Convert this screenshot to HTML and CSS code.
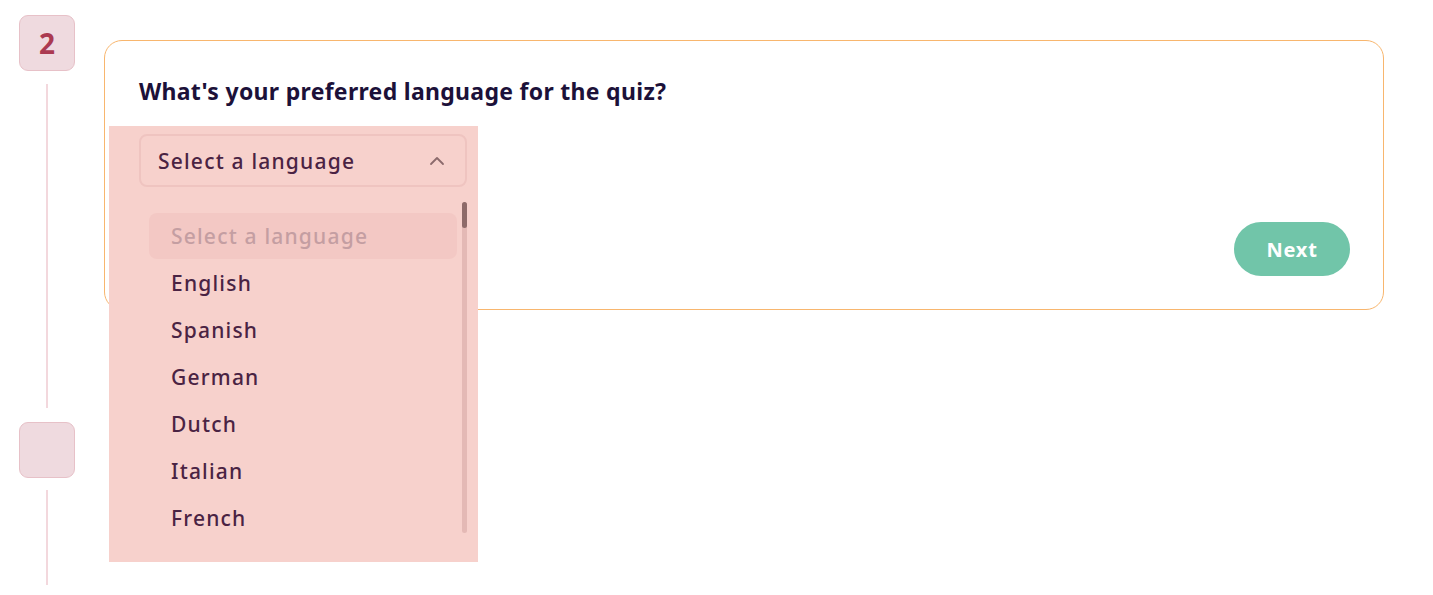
FILE: index.html
```html
<!DOCTYPE html>
<html lang="en">
<head>
    <meta charset="UTF-8">
    <title>Quiz setup</title>
    <link rel="stylesheet" href="styles.css">
</head>
<body>
    <div class="steps">
        <div class="timeline">
            <div class="step-badge">2</div>
            <div class="step-line step-line-long"></div>
            <div class="step-badge"></div>
            <div class="step-line step-line-short"></div>
        </div>

        <div class="question-card">
            <h2 class="question">What's your preferred language for the quiz?</h2>

            <div class="select-wrap">
                <div class="dropdown-panel">
                    <div class="select-trigger">
                        <span>Select a language</span>
                        <svg class="chevron" width="16" height="10" viewBox="0 0 16 10">
                            <path d="M2 8 L8 2 L14 8" fill="none" stroke="#8c6a6c" stroke-width="1.8" stroke-linecap="round" stroke-linejoin="round"/>
                        </svg>
                    </div>
                    <div class="option-list">
                        <ul class="options">
                            <li class="option option-placeholder">Select a language</li>
                            <li class="option">English</li>
                            <li class="option">Spanish</li>
                            <li class="option">German</li>
                            <li class="option">Dutch</li>
                            <li class="option">Italian</li>
                            <li class="option">French</li>
                        </ul>
                        <div class="scrollbar"><div class="scroll-thumb"></div></div>
                    </div>
                </div>
            </div>

            <div class="card-footer">
                <button class="next-btn" type="button">Next</button>
            </div>
        </div>
    </div>
</body>
</html>
```

FILE: styles.css
```css
body {
    margin: 0;
    padding: 0;
    background-color: #fff;
    font-family: "Noto Sans", "Open Sans", sans-serif;
    color: #4a2343;
}

.steps {
    display: flex;
    align-items: flex-start;
    padding-left: 19px;
    gap: 29px;
}

/* timeline */
.timeline {
    display: flex;
    flex-direction: column;
    align-items: center;
    width: 56px;
    padding-top: 15px;
}

.step-badge {
    box-sizing: border-box;
    width: 56px;
    height: 56px;
    border: 1px solid #e7c1c8;
    border-radius: 9px;
    background-color: #efdadf;
    color: #ab3a51;
    font-size: 28px;
    font-weight: 700;
    display: flex;
    align-items: center;
    justify-content: center;
}

.step-line {
    width: 2px;
    background-color: #f3d8dd;
}

.step-line-long {
    height: 324px;
    margin: 13px 0 14px;
}

.step-line-short {
    height: 95px;
    margin-top: 12px;
}

/* card */
.question-card {
    box-sizing: border-box;
    width: 1280px;
    margin-top: 40px;
    padding: 36px 33px 33px 34px;
    border: 1px solid #f8b66e;
    border-radius: 18px;
}

.question {
    margin: 0 0 29px;
    font-size: 23px;
    line-height: 28px;
    font-weight: 700;
    letter-spacing: 0.3px;
    color: #1c1139;
}

.select-wrap {
    position: relative;
    width: 328px;
    height: 53px;
}

.dropdown-panel {
    position: absolute;
    top: -8px;
    left: -30px;
    width: 369px;
    height: 436px;
    box-sizing: border-box;
    padding: 8px 11px 0 30px;
    background-color: #f7d1cc;
    z-index: 2;
}

.select-trigger {
    box-sizing: border-box;
    height: 53px;
    display: flex;
    align-items: center;
    justify-content: space-between;
    padding: 0 20px 0 17px;
    border: 2px solid #efc4c0;
    border-radius: 8px;
    font-size: 21px;
    font-weight: 500;
    letter-spacing: 1.2px;
    color: #4a2343;
}

.option-list {
    display: flex;
    margin-top: 15px;
    height: 331px;
}

.options {
    list-style: none;
    margin: 0;
    padding: 11px 0 0 10px;
    width: 308px;
}

.option {
    height: 46px;
    margin-bottom: 1px;
    padding-left: 22px;
    display: flex;
    align-items: center;
    border-radius: 8px;
    font-size: 21px;
    font-weight: 500;
    letter-spacing: 1.2px;
    color: #4a2343;
}

.option-placeholder {
    background-color: #f3c8c4;
    color: #c49ea2;
}

.scrollbar {
    width: 5px;
    margin-left: 5px;
    border-radius: 3px;
    background-color: #e4b9b5;
}

.scroll-thumb {
    height: 26px;
    border-radius: 3px;
    background-color: #8e6a69;
}

.card-footer {
    display: flex;
    justify-content: flex-end;
    margin-top: 35px;
}

.next-btn {
    width: 116px;
    height: 54px;
    border: none;
    border-radius: 27px;
    background-color: #71c5a9;
    color: #fff;
    font-family: "Noto Sans", sans-serif;
    font-size: 20px;
    font-weight: 700;
    letter-spacing: 0.8px;
}
```
